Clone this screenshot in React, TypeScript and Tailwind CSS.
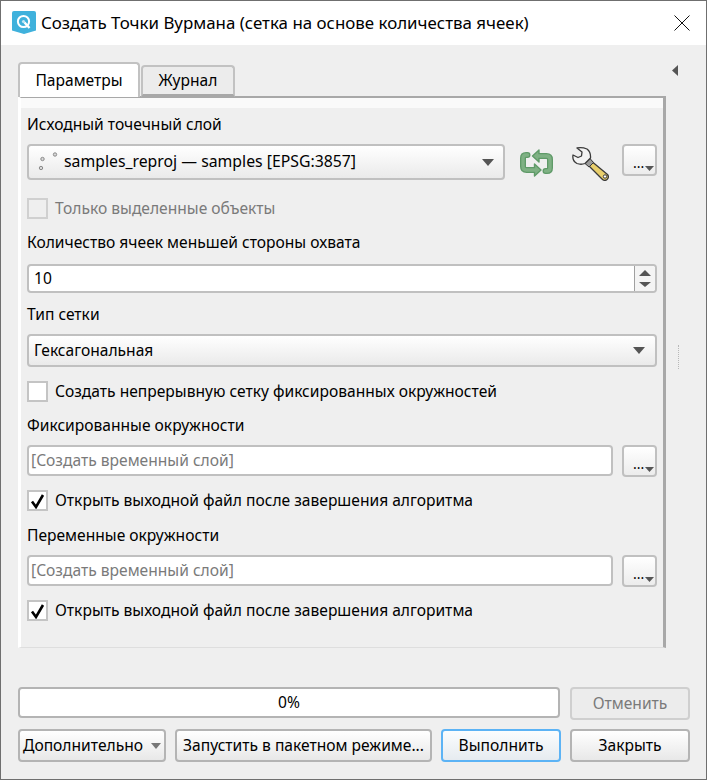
const font = { fontFamily: '"Noto Sans", "Open Sans", sans-serif' };

function Caret({ className = "" }: { className?: string }) {
  return (
    <svg width="12" height="7" viewBox="0 0 12 7" className={className}>
      <path d="M0 0H12L6 7Z" fill="#555" />
    </svg>
  );
}

function Check({ checked, disabled }: { checked?: boolean; disabled?: boolean }) {
  return (
    <span className={`w-[21px] h-[21px] border-2 shrink-0 flex items-center justify-center ${disabled ? "border-[#d0d0d0] bg-[#efefef]" : "border-[#c4c4c4] bg-white"}`}>
      {checked && (
        <svg width="15" height="16" viewBox="0 0 15 16">
          <path d="M2 8.5L6 14L13 2" fill="none" stroke="#000" strokeWidth="2.6" />
        </svg>
      )}
    </span>
  );
}

function CheckRow({ label, checked, disabled, className = "" }: { label: string; checked?: boolean; disabled?: boolean; className?: string }) {
  return (
    <div className={`flex items-center gap-[7px] h-[21px] ${className}`}>
      <Check checked={checked} disabled={disabled} />
      <span className={disabled ? "text-[#7a7a7a]" : "text-black"}>{label}</span>
    </div>
  );
}

function Dots() {
  return (
    <button className="w-[35px] h-[32px] shrink-0 border-2 border-[#c0c0c0] rounded-[4px] bg-gradient-to-b from-white to-[#ececec] relative">
      <span className="absolute left-[9px] top-[7px] text-[14px] leading-[20px] text-black">...</span>
      <svg width="9" height="5" viewBox="0 0 9 5" className="absolute right-[1px] bottom-[3px]">
        <path d="M0 0H9L4.5 5Z" fill="#555" />
      </svg>
    </button>
  );
}

function OutputRow({ className = "" }: { className?: string }) {
  return (
    <div className={`flex gap-[9px] ${className}`}>
      <div className="w-[586px] h-[31px] border-2 border-[#c0c0c0] rounded-[4px] bg-white px-[2px] flex items-center text-[#7a7a7a]">
        [Создать временный слой]
      </div>
      <Dots />
    </div>
  );
}

function Btn({ w, children, disabled, primary }: { w: string; children: React.ReactNode; disabled?: boolean; primary?: boolean }) {
  const tone = disabled
    ? "border-[#cfcfcf] text-[#7a7a7a] bg-[#ececec]"
    : primary
    ? "border-[#5cb3f5] text-black bg-gradient-to-b from-[#fbfdfe] to-[#e6ebf0]"
    : "border-[#b4b4b4] text-black bg-gradient-to-b from-white to-[#e8e8e8]";
  return (
    <button className={`${w} h-[33px] border-2 rounded-[4px] flex items-center justify-center whitespace-nowrap shrink-0 ${tone}`}>
      {children}
    </button>
  );
}

function QgisLogo() {
  return (
    <svg width="24" height="24" viewBox="0 0 24 24" className="shrink-0">
      <path d="M0 2Q0 0 2 0H22Q24 0 24 2V19.5L12 23L0 19.5Z" fill="#3fb1dc" />
      <circle cx="11.5" cy="10.5" r="5.6" fill="none" stroke="#fff" strokeWidth="2" />
      <path d="M12.5 11.5L17.5 17" stroke="#fff" strokeWidth="2.4" />
      <circle cx="11.5" cy="10.5" r="1.6" fill="#fff" opacity=".7" />
    </svg>
  );
}

function RefreshIcon() {
  const a = "M17 7H26.5Q30 7 30 10.5V19Q30 22 27 22H25.5";
  const b = "M16 21H6.5Q3 21 3 17.5V9Q3 6 6 6H7.5";
  return (
    <svg width="33" height="28" viewBox="0 0 33 28" className="shrink-0">
      <g fill="none" stroke="#5f9a68" strokeWidth="6" strokeLinecap="round">
        <path d={a} />
        <path d={b} />
      </g>
      <g fill="#7fb184" stroke="#5f9a68" strokeWidth="1.4" strokeLinejoin="round">
        <path d="M19 1L12.5 7L19 13Z" />
        <path d="M14.5 15L21 21L14.5 27Z" />
      </g>
      <g fill="none" stroke="#7fb184" strokeWidth="3.4" strokeLinecap="round">
        <path d={a} />
        <path d={b} />
      </g>
    </svg>
  );
}

function WrenchIcon() {
  return (
    <svg width="37" height="34" viewBox="0 0 37 34" className="shrink-0">
      <path d="M18 13L35.5 27.5Q37.5 30 35 32.5Q32.5 34.5 30 32L15 17Z" fill="#e9cf6c" stroke="#3a3a3a" strokeWidth="1.3" strokeLinejoin="round" />
      <path d="M13 16.5L17 20L21.5 15.5L18 11.5Z" fill="#9a9a9a" stroke="#3a3a3a" strokeWidth="1" />
      <path d="M5 1L10 5L9.5 9L6 10.5L1 8Q0 14 5 16.5Q9 18 13 16.5L18.5 11Q19 5 15 2Q10 0 5 1Z" fill="#f4f4f4" stroke="#3a3a3a" strokeWidth="1.3" strokeLinejoin="round" />
      <circle cx="33" cy="29.5" r="1.7" fill="#fff" stroke="#3a3a3a" strokeWidth="1" />
    </svg>
  );
}

export default function App() {
  return (
    <div style={font} className="w-[707px] h-[780px] border border-[#6f6f6f] bg-[#efefef] text-[15.6px] text-black flex flex-col overflow-hidden">
      <div className="h-[44px] bg-white flex items-center shrink-0 pl-[11px] pr-[16px]">
        <QgisLogo />
        <span className="ml-[5px] text-[16.9px] whitespace-nowrap">Создать Точки Вурмана (сетка на основе количества ячеек)</span>
        <svg width="16" height="16" viewBox="0 0 16 16" className="ml-auto shrink-0">
          <path d="M0.5 0.5L15.5 15.5M15.5 0.5L0.5 15.5" stroke="#111" strokeWidth="1" />
        </svg>
      </div>

      <div className="flex-1 flex flex-col pl-[17px] pr-[15px] pt-[17px]">
        <div className="flex items-start">
          <div className="w-[648px] shrink-0">
            <div className="flex items-end h-[35px] relative z-10">
              <div className="w-[122px] h-[35px] bg-white border-2 border-b-0 border-[#c2c2c2] rounded-t-[4px] flex items-center justify-center">Параметры</div>
              <div className="ml-[1px] w-[94px] h-[32px] pt-[1px] bg-[#ececec] border-2 border-b-[3px] border-[#c2c2c2] border-b-[#a8a8a8] rounded-t-[4px] flex items-center justify-center">Журнал</div>
            </div>
            <div className="h-[552px] border-r-[3px] border-t-2 border-t-[#a8a8a8] border-r-[#a8a8a8] border-b border-b-[#dedede] border-l-[3px] border-l-white -mt-[1px]">
              <div className="h-[10px] bg-[#fafafa]" />
              <div className="px-[6px]">
                <div className="h-[34px] flex items-center">Исходный точечный слой</div>
                <div className="flex items-start mt-[2px]">
                  <div className="w-[478px] h-[36px] border-2 border-[#c0c0c0] rounded-[4px] bg-gradient-to-b from-white to-[#eaeaea] flex items-center pl-[8px] pr-[9px]">
                    <svg width="20" height="18" viewBox="0 0 20 18" className="shrink-0 overflow-visible">
                      <g fill="#d8d8d8" stroke="#8a8a8a">
                        <circle cx="4" cy="15" r="1.7" />
                        <circle cx="5.5" cy="6" r="1.7" />
                        <circle cx="18" cy="1.5" r="1.7" />
                      </g>
                    </svg>
                    <span className="ml-[7px] whitespace-nowrap text-[15.8px]">samples_reproj — samples [EPSG:3857]</span>
                    <Caret className="ml-auto" />
                  </div>
                  <div className="ml-[15px] mt-[5px]"><RefreshIcon /></div>
                  <div className="ml-[19px] mt-[3px]"><WrenchIcon /></div>
                  <div className="ml-[13px]"><Dots /></div>
                </div>
                <CheckRow disabled label="Только выделенные объекты" className="mt-[17px]" />
                <div className="h-[24px] mt-[12px] flex items-center">Количество ячеек меньшей стороны охвата</div>
                <div className="mt-[9px] w-[630px] h-[29px] border-2 border-[#c0c0c0] rounded-[4px] bg-white flex items-center pl-[5px]">
                  10
                  <div className="ml-auto w-[21px] h-full border-l border-[#a0a0a0] flex flex-col items-center justify-center gap-[6px] bg-[#f4f4f4] rounded-r-[3px]">
                    <svg width="12" height="6" viewBox="0 0 12 6"><path d="M0 6H12L6 0Z" fill="#555" /></svg>
                    <svg width="12" height="5" viewBox="0 0 12 5"><path d="M0 0H12L6 5Z" fill="#555" /></svg>
                  </div>
                </div>
                <div className="h-[24px] mt-[10px] flex items-center">Тип сетки</div>
                <div className="mt-[7px] w-[630px] h-[33px] border-2 border-[#c0c0c0] rounded-[4px] bg-gradient-to-b from-white to-[#eaeaea] flex items-center pl-[5px] pr-[10px]">
                  Гексагональная
                  <Caret className="ml-auto" />
                </div>
                <CheckRow label="Создать непрерывную сетку фиксированных окружностей" className="mt-[14px]" />
                <div className="h-[24px] mt-[12px] flex items-center">Фиксированные окружности</div>
                <OutputRow className="mt-[7px]" />
                <CheckRow checked label="Открыть выходной файл после завершения алгоритма" className="mt-[13px]" />
                <div className="h-[24px] mt-[13px] flex items-center">Переменные окружности</div>
                <OutputRow className="mt-[7px]" />
                <CheckRow checked label="Открыть выходной файл после завершения алгоритма" className="mt-[13px]" />
              </div>
            </div>
          </div>
          <div className="ml-[6px] mt-[3px] flex flex-col">
            <svg width="6" height="11" viewBox="0 0 6 11"><path d="M6 0V11L0 5.5Z" fill="#555" /></svg>
            <div className="mt-[269px] ml-[6px] h-[24px] border-l border-dotted border-[#b8b8b8]" />
          </div>
        </div>

        <div className="mt-[39px] flex items-start gap-[10px]">
          <div className="w-[542px] h-[31px] border-2 border-[#b4b4b4] rounded-[4px] bg-white flex items-center justify-center">0%</div>
          <Btn w="w-[120px]" disabled>Отменить</Btn>
        </div>
        <div className="mt-[9px] flex gap-[9px]">
          <Btn w="w-[148px]">
            Дополнительно
            <svg width="10" height="6" viewBox="0 0 10 6" className="ml-[8px]"><path d="M0 0H10L5 6Z" fill="#777" /></svg>
          </Btn>
          <Btn w="w-[257px]">Запустить в пакетном режиме...</Btn>
          <Btn w="w-[120px]" primary>Выполнить</Btn>
          <Btn w="w-[120px]">Закрыть</Btn>
        </div>
      </div>
    </div>
  );
}
